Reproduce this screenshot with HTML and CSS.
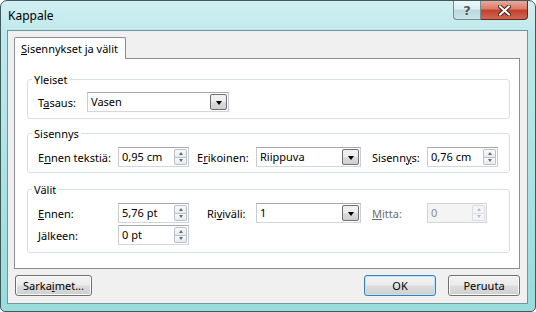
FILE: index.html
```html
<!DOCTYPE html>
<html lang="fi">
<head>
    <meta charset="UTF-8">
    <title>Kappale</title>
    <link rel="stylesheet" href="styles.css">
</head>
<body>
    <div class="window">
        <div class="titlebar">
            <span class="title">Kappale</span>
            <div class="caption-buttons">
                <button class="cap-help">?</button>
                <button class="cap-close">
                    <svg width="13" height="11" viewBox="0 0 13 11">
                        <path d="M2 1.5 L11 9.5 M11 1.5 L2 9.5" stroke="#4a1e16" stroke-width="4" stroke-linecap="square"/>
                        <path d="M2 1.5 L11 9.5 M11 1.5 L2 9.5" stroke="#ffffff" stroke-width="2" stroke-linecap="square"/>
                    </svg>
                </button>
            </div>
        </div>

        <div class="client">
            <div class="tab"><u>S</u>isennykset ja välit</div>
            <div class="panel">
                <fieldset class="group">
                    <legend>Yleiset</legend>
                    <div class="row row-general">
                        <span class="lbl">T<u>a</u>saus:</span>
                        <div class="combo"><span class="value">Vasen</span><span class="drop"></span></div>
                    </div>
                </fieldset>

                <fieldset class="group group-indent">
                    <legend>Sisennys</legend>
                    <div class="row row-wide">
                        <span class="lbl">E<u>n</u>nen tekstiä:</span>
                        <div class="spin"><span class="value">0,95 cm</span><span class="arrows"><span class="up"></span><span class="down"></span></span></div>
                        <span class="lbl lbl-mid">E<u>r</u>ikoinen:</span>
                        <div class="combo"><span class="value">Riippuva</span><span class="drop"></span></div>
                        <span class="lbl lbl-end">Sisenn<u>y</u>s:</span>
                        <div class="spin"><span class="value">0,76 cm</span><span class="arrows"><span class="up"></span><span class="down"></span></span></div>
                    </div>
                </fieldset>

                <fieldset class="group group-spacing">
                    <legend>Välit</legend>
                    <div class="row row-wide row-spacing">
                        <span class="lbl"><u>E</u>nnen:</span>
                        <div class="spin"><span class="value">5,76 pt</span><span class="arrows"><span class="up"></span><span class="down"></span></span></div>
                        <span class="lbl lbl-mid lbl-far">Ri<u>v</u>iväli:</span>
                        <div class="combo"><span class="value">1</span><span class="drop"></span></div>
                        <span class="lbl lbl-end disabled"><u>M</u>itta:</span>
                        <div class="spin disabled"><span class="value">0</span><span class="arrows"><span class="up"></span><span class="down"></span></span></div>
                    </div>
                    <div class="row row-wide row-spacing">
                        <span class="lbl"><u>J</u>älkeen:</span>
                        <div class="spin"><span class="value">0 pt</span><span class="arrows"><span class="up"></span><span class="down"></span></span></div>
                    </div>
                </fieldset>
            </div>

            <div class="footer">
                <button class="btn btn-tabs">Sarka<u>i</u>met...</button>
                <button class="btn btn-default">OK</button>
                <button class="btn">Peruuta</button>
            </div>
        </div>
    </div>
</body>
</html>
```

FILE: styles.css
```css
body {
    margin: 0;
    background: #ffffff;
    font-family: "Segoe UI", "Noto Sans", "Open Sans", sans-serif;
    font-size: 11px;
    color: #000000;
}
u {
    text-decoration-thickness: 1px;
    text-underline-offset: 1px;
}
.window {
    width: 536px;
    height: 312px;
    box-sizing: border-box;
    border: 1px solid #3e5a5e;
    border-radius: 7px 7px 5px 5px;
    background: linear-gradient(180deg, #d2eff2 0%, #bfe9ec 10%, #a9e2e4 60%, #98dcdc 100%);
    padding: 0 7px 7px 6px;
    display: flex;
    flex-direction: column;
}
.titlebar {
    height: 29px;
    display: flex;
    align-items: flex-start;
}
.title {
    padding: 7px 0 0 1px;
    line-height: 15px;
    font-size: 12px;
}
.caption-buttons {
    margin-left: auto;
    display: flex;
}
.caption-buttons button {
    height: 19px;
    padding: 0;
    margin: 0;
    display: flex;
    align-items: center;
    justify-content: center;
}
.cap-help {
    width: 28px;
    border: 1px solid #6f8f95;
    border-top: none;
    border-radius: 0 0 0 4px;
    background: linear-gradient(180deg, #eef7f8 0%, #dcecef 45%, #bcd8dd 50%, #c9e3e6 100%);
    font-family: "DejaVu Sans", sans-serif;
    font-weight: bold;
    font-size: 13px;
    color: #4e5a60;
    text-shadow: 0 0 2px #ffffff;
}
.cap-close {
    width: 47px;
    border: 1px solid #5c2a22;
    border-top: none;
    border-left: none;
    border-radius: 0 0 4px 0;
    background: linear-gradient(180deg, #e9a99b 0%, #d97a66 45%, #c2412c 50%, #d3664f 100%);
}
.client {
    flex: 1;
    border: 1px solid #6c979c;
    background: #f0f0f0;
    padding: 6px 7px 7px 6px;
    display: flex;
    flex-direction: column;
}
.tab {
    align-self: flex-start;
    height: 22px;
    box-sizing: border-box;
    border: 1px solid #898c95;
    border-bottom: none;
    border-radius: 2px 2px 0 0;
    background: #ffffff;
    padding: 0 7px 0 6px;
    line-height: 21px;
    margin-bottom: -1px;
    position: relative;
    z-index: 1;
}
.panel {
    border: 1px solid #898c95;
    background: #ffffff;
    padding: 13px 9px 15px 12px;
}
.group {
    margin: 0;
    padding: 5px 0 6px 0;
    border: 1px solid #d5dfe5;
    border-radius: 3px;
    min-width: 0;
}
.group legend {
    margin-left: 4px;
    padding: 0 2px;
    line-height: 15px;
}
.group-indent {
    margin-top: 7px;
    padding: 6px 0 5px 0;
}
.group-spacing {
    margin-top: 9px;
    padding: 6px 0 7px 0;
}
.row {
    display: grid;
    align-items: center;
    margin-left: 10px;
}
.row + .row {
    margin-top: 2px;
}
.row-general {
    grid-template-columns: 49px 142px;
}
.row-wide {
    grid-template-columns: 80px 71px 67px 105px 66px 71px;
}
.row-spacing {
    grid-template-columns: 80px 71px 67px 105px 66px 60px;
}
.lbl {
    line-height: 15px;
    white-space: nowrap;
}
.lbl-mid {
    padding-left: 8px;
}
.lbl-far {
    padding-left: 18px;
}
.lbl-end {
    padding-left: 11px;
}
.lbl.disabled {
    color: #6d6d6d;
}
.combo,
.spin {
    height: 20px;
    box-sizing: border-box;
    border: 1px solid #abadb3;
    border-color: #a4a7ad #c9ccd2 #d3d6db #c9ccd2;
    background: #ffffff;
    display: flex;
    align-items: center;
}
.value {
    padding-left: 3px;
    line-height: 18px;
}
.drop {
    margin: 0 1px 0 auto;
    width: 17px;
    height: 16px;
    box-sizing: border-box;
    border: 1px solid #707070;
    border-radius: 2px;
    background: linear-gradient(180deg, #f2f2f2 0%, #ebebeb 50%, #dddddd 50%, #cfcfcf 100%);
    display: flex;
    align-items: center;
    justify-content: center;
}
.drop::after {
    content: "";
    border-left: 3.5px solid transparent;
    border-right: 3.5px solid transparent;
    border-top: 4px solid #000000;
    margin-top: 1px;
}
.arrows {
    margin: 0 1px 0 auto;
    width: 13px;
    height: 16px;
    display: flex;
    flex-direction: column;
}
.arrows span {
    flex: 1;
    border: 1px solid #b9c0ca;
    background: linear-gradient(180deg, #fbfbfc 0%, #e6e9ed 100%);
    display: flex;
    align-items: center;
    justify-content: center;
}
.arrows .up {
    border-radius: 2px 2px 0 0;
}
.arrows .down {
    border-top: none;
    border-radius: 0 0 2px 2px;
}
.arrows .up::after {
    content: "";
    border-left: 2.5px solid transparent;
    border-right: 2.5px solid transparent;
    border-bottom: 3px solid #5b6b80;
}
.arrows .down::after {
    content: "";
    border-left: 2.5px solid transparent;
    border-right: 2.5px solid transparent;
    border-top: 3px solid #5b6b80;
}
.spin.disabled {
    background: #f4f4f4;
    border-color: #d5d5d5;
    color: #8d8d8d;
}
.spin.disabled .arrows span {
    border-color: #dadde2;
    background: #f4f5f7;
}
.spin.disabled .arrows .up::after {
    border-bottom-color: #b4bcc6;
}
.spin.disabled .arrows .down::after {
    border-top-color: #b4bcc6;
}
.footer {
    margin-top: 6px;
    display: flex;
}
.btn {
    height: 21px;
    width: 72px;
    padding: 0;
    font: inherit;
    color: #000000;
    border: 1px solid #707070;
    border-radius: 3px;
    background: linear-gradient(180deg, #f2f2f2 0%, #ebebeb 48%, #dddddd 52%, #cfcfcf 100%);
    box-shadow: inset 0 0 0 1px #fbfbfb;
}
.btn-tabs {
    width: 77px;
    margin-left: 1px;
}
.btn-default {
    margin-left: auto;
    margin-right: 12px;
    border-color: #3c7fb1;
    box-shadow: inset 0 0 0 1px #b8e5fb;
}
```
